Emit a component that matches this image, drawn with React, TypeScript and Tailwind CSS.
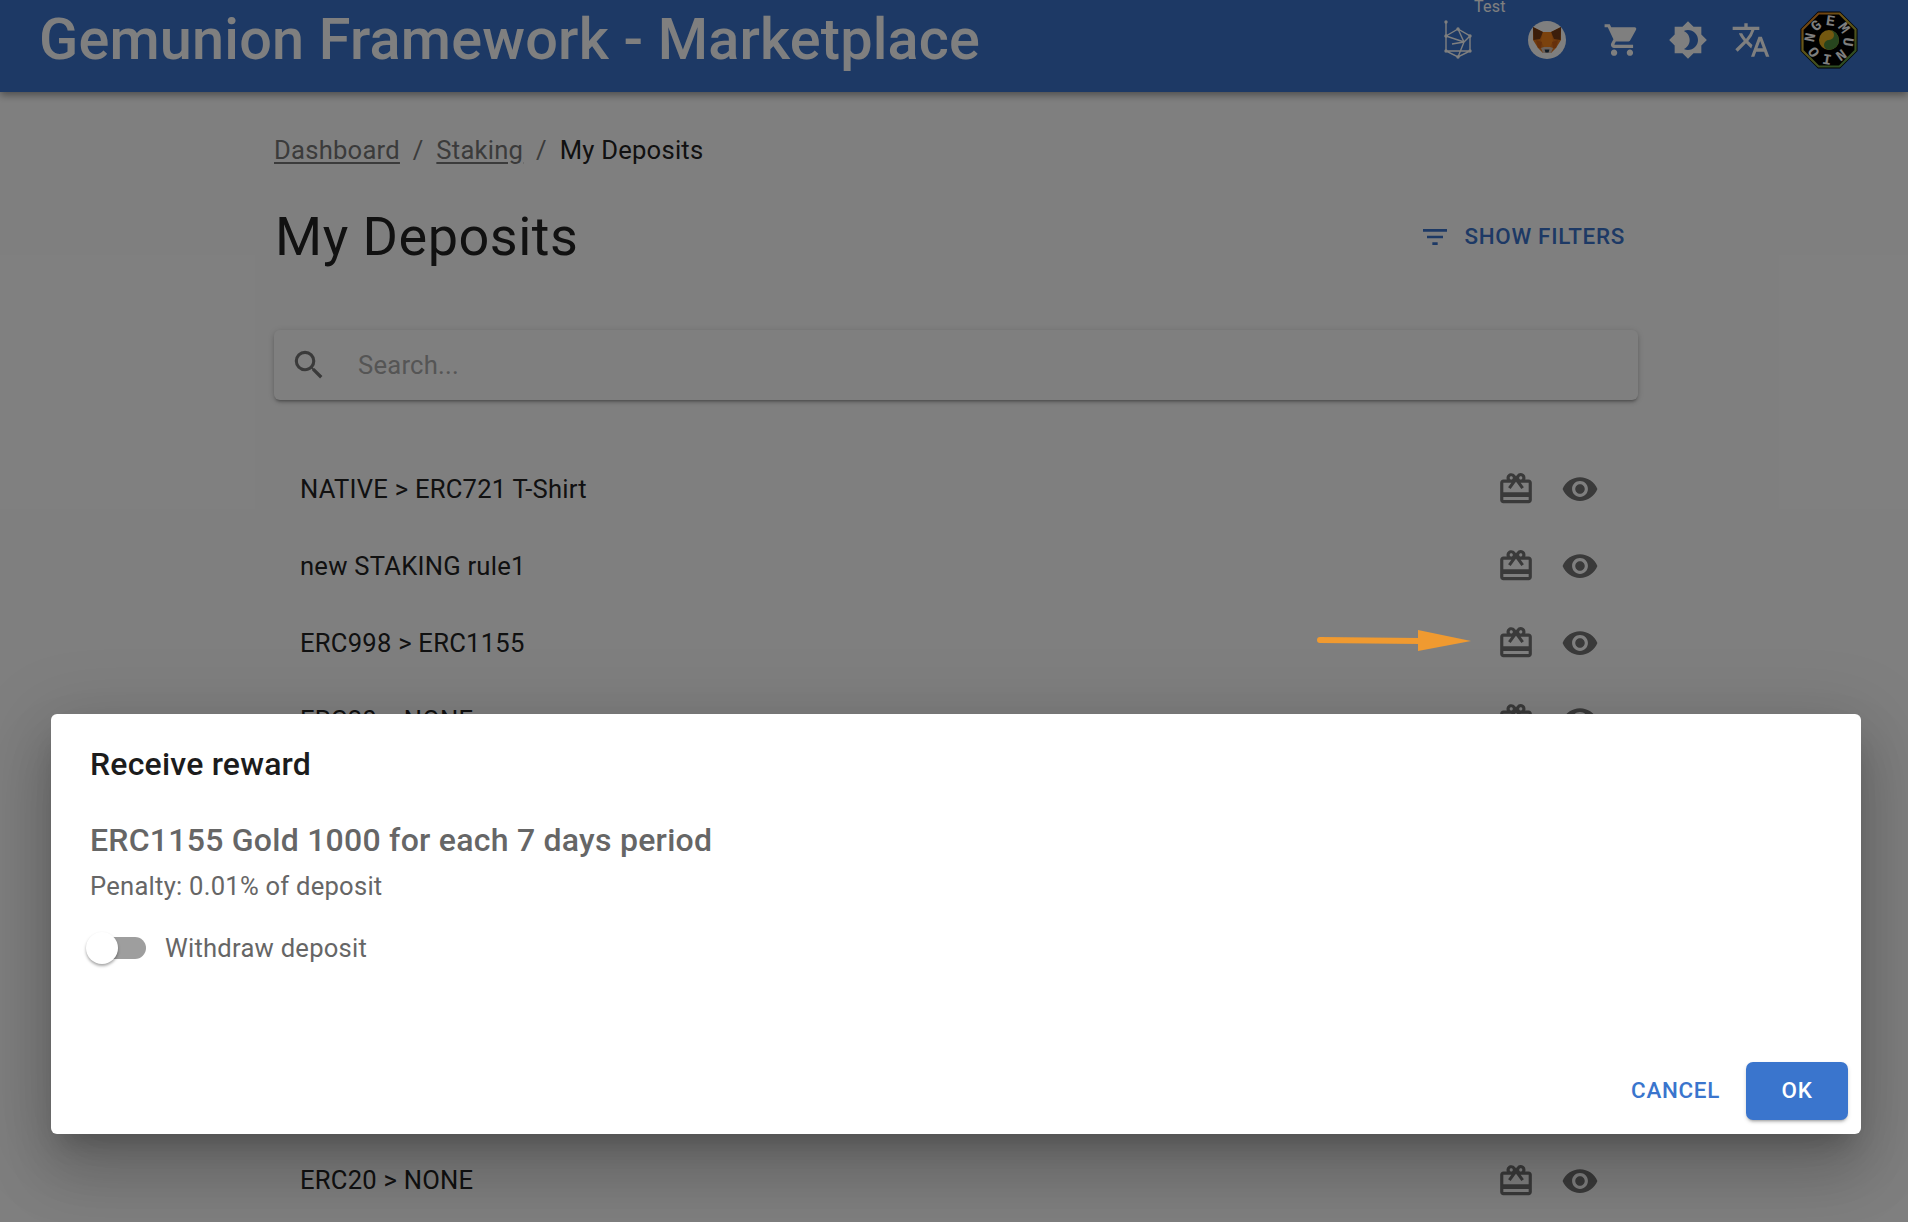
import { MdBrightness4, MdCardGiftcard, MdFilterList, MdSearch, MdShoppingCart, MdTranslate, MdVisibility } from "react-icons/md";

const rows = [
  "NATIVE > ERC721 T-Shirt",
  "new STAKING rule1",
  "ERC998 > ERC1155",
  "ERC20 > NONE",
  "ERC20 > ERC20",
  "ERC721 > ERC20",
  "ERC1155 > ERC721",
  "NATIVE > NATIVE",
  "ERC998 > NONE",
  "ERC20 > NONE",
];

function NetworkIcon() {
  const nodes = [
    [2, 3], [2, 17], [2, 32], [14, 10], [26, 17], [26, 32], [14, 38],
  ];
  return (
    <svg width="30" height="42" viewBox="0 0 30 42" fill="none" stroke="#fff" strokeWidth="1.4">
      <path d="M2 3V32L14 38L26 32V17L14 10L2 17L20 23L14 38M26 32L2 32M14 10L20 23L26 17M8 25L20 23" />
      {nodes.map(([x, y], i) => (
        <circle key={i} cx={x} cy={y} r="1.7" fill="#fff" stroke="none" />
      ))}
    </svg>
  );
}

function FoxIcon() {
  return (
    <svg width="38" height="38" viewBox="0 0 38 38">
      <circle cx="19" cy="19" r="19" fill="#fff" />
      <path d="M5 6L15 11H23L33 6L33 19L28 27L23 32H15L10 27L5 19Z" fill="#e2761b" />
      <path d="M5 6L15 11L12 18L5.5 19Z" fill="#763d16" />
      <path d="M33 6L23 11L26 18L32.5 19Z" fill="#763d16" />
      <path d="M15 11H23L25 20L22 26H16L13 20Z" fill="#f6851b" />
      <path d="M8 19L14 21L13 27L10 27Z" fill="#cd6116" />
      <path d="M30 19L24 21L25 27L28 27Z" fill="#cd6116" />
      <path d="M13 27L16 26H22L25 27L23 32H15Z" fill="#d7c1b3" />
      <path d="M16.5 28.5H21.5L20.5 31.5H17.5Z" fill="#233447" />
    </svg>
  );
}

function GemunionLogo() {
  return (
    <svg width="58" height="58" viewBox="0 0 58 58">
      <defs>
        <linearGradient id="rim" x1="0" y1="0" x2="0.6" y2="1">
          <stop offset="0" stopColor="#e8701e" />
          <stop offset="0.4" stopColor="#d8b030" />
          <stop offset="1" stopColor="#5f9a45" />
        </linearGradient>
        <path id="ring" d="M29 14.5A14.5 14.5 0 1 1 28.99 14.5" />
      </defs>
      <polygon points="18,0.5 40,0.5 57.5,18 57.5,40 40,57.5 18,57.5 0.5,40 0.5,18" fill="#000" />
      <polygon points="18.5,2.5 39.5,2.5 55.5,18.5 55.5,39.5 39.5,55.5 18.5,55.5 2.5,39.5 2.5,18.5" fill="none" stroke="url(#rim)" strokeWidth="2.2" />
      <g transform="rotate(-60 29 29)">
        <text fontFamily="'Liberation Mono', monospace" fontSize="15" fontWeight="700" fill="#fff" letterSpacing="2.4">
          <textPath href="#ring">GEMUNION</textPath>
        </text>
      </g>
      <circle cx="29" cy="29" r="10" fill="#e8b020" />
      <path d="M29 19A10 10 0 0 1 29 39A5 5 0 0 1 29 29A5 5 0 0 0 29 19Z" fill="#4f8a3c" />
    </svg>
  );
}

export default function App() {
  return (
    <div className="relative h-[1222px] overflow-hidden bg-white font-['Roboto',sans-serif] text-[25.6px] tracking-[0.24px] text-[#222]">
      <header className="flex h-[92px] items-center justify-between bg-[#3a73cb] pb-[12px] pl-[39px] pr-[50px] shadow-[0_3px_8px_rgba(0,0,0,0.4)]">
        <h1 className="text-[57.6px] font-medium tracking-[0.2px] text-white">Gemunion Framework - Marketplace</h1>
        <div className="flex items-center">
          <div className="relative mr-[54px]">
            <NetworkIcon />
            <span className="absolute left-[30px] top-[-22px] text-[16px] leading-[20px] text-white">Test</span>
          </div>
          <FoxIcon />
          <MdShoppingCart className="ml-[37px] text-white" size={38} />
          <MdBrightness4 className="ml-[27px] text-white" size={40} />
          <MdTranslate className="ml-[23px] text-white" size={40} />
          <div className="ml-[29px]">
            <GemunionLogo />
          </div>
        </div>
      </header>

      <main className="ml-[274px] w-[1364px]">
        <nav className="mt-[39px] flex h-[38px] items-center text-[#777]">
          <span className="underline underline-offset-[3px]">Dashboard</span>
          <span className="mx-[12.8px]">/</span>
          <span className="underline underline-offset-[3px]">Staking</span>
          <span className="mx-[12.8px]">/</span>
          <span className="text-[#222]">My Deposits</span>
        </nav>

        <div className="mt-[37px] flex h-[60px] items-center justify-between pl-[1px] pr-[13px]">
          <h2 className="text-[54px] font-normal tracking-[0.5px] text-[#222]">My Deposits</h2>
          <div className="mt-[2px] flex items-center text-[#3a73cb]">
            <MdFilterList size={32} />
            <span className="ml-[13px] text-[22.4px] font-medium uppercase tracking-[0.7px]">Show filters</span>
          </div>
        </div>

        <div className="mt-[64px] flex h-[70px] items-center rounded-[6px] bg-white pl-[16px] shadow-[0_3px_3px_-2px_rgba(0,0,0,0.3),0_2px_4px_rgba(0,0,0,0.14),0_1px_8px_rgba(0,0,0,0.12)]">
          <MdSearch className="text-[#757575]" size={38} />
          <span className="ml-[30px] text-[#aaa]">Search...</span>
        </div>

        <ul className="mt-[51px]">
          {rows.map((r, i) => (
            <li key={i} className="flex h-[76.8px] items-center justify-between pl-[26px] pr-[39px]">
              <span>{r}</span>
              <div className="flex items-center gap-[26px] text-[#757575]">
                <MdCardGiftcard size={38} />
                <MdVisibility size={38} />
              </div>
            </li>
          ))}
        </ul>
      </main>

      {/* backdrop + dialog */}
      <div className="absolute inset-0 flex items-start bg-black/50 pl-[51px] pt-[714px]">
        <div className="flex h-[420px] w-[1810px] flex-col rounded-[6px] bg-white px-[39px] shadow-[0_18px_24px_-11px_rgba(0,0,0,0.2),0_38px_61px_5px_rgba(0,0,0,0.14),0_14px_74px_13px_rgba(0,0,0,0.12)]">
          <h3 className="mt-[31px] text-[32px] font-medium leading-[38px] tracking-[0.2px] text-[#1c1c1c]">Receive reward</h3>
          <div className="mt-[37px] text-[32px] font-medium leading-[40px] tracking-[0.25px] text-[#666]">ERC1155 Gold 1000 for each 7 days period</div>
          <div className="mt-[6px] leading-[40px] text-[#666]">Penalty: 0.01% of deposit</div>
          <div className="mt-[22px] flex h-[40px] items-center text-[#666]">
            <div className="relative ml-[-4px] h-[22px] w-[60px]">
              <div className="absolute left-[8px] right-0 top-0 h-[22px] rounded-full bg-[#9e9e9e]" />
              <div className="absolute left-0 top-[-5px] h-[32px] w-[32px] rounded-full bg-white shadow-[0_2px_3px_rgba(0,0,0,0.35)]" />
            </div>
            <span className="ml-[19px]">Withdraw deposit</span>
          </div>
          <div className="mb-[14px] mr-[-26px] mt-auto flex items-center justify-end">
            <span className="mr-[26px] text-[22.4px] font-medium tracking-[0.7px] text-[#3a75cd]">CANCEL</span>
            <span className="flex h-[58px] w-[102px] items-center justify-center rounded-[7px] bg-[#3a75cd] text-[22.4px] font-medium tracking-[0.7px] text-white shadow-[0_3px_3px_-2px_rgba(0,0,0,0.3),0_2px_4px_rgba(0,0,0,0.14)]">OK</span>
          </div>
        </div>
      </div>

      {/* annotation arrow */}
      <svg className="absolute left-[1310px] top-[624px]" width="170" height="34" viewBox="0 0 170 34">
        <path d="M10 16L110 17" stroke="#f09a30" strokeWidth="6" strokeLinecap="round" />
        <polygon points="108,6 161,17 108,27" fill="#f09a30" />
      </svg>
    </div>
  );
}
